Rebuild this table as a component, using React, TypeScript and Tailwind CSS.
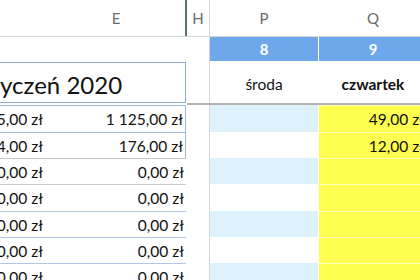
const rows = [
  { d: "5,00 zł", e: "1 125,00 zł", q: "49,00 zł", h: "h-[27px]", line: "border-[#9db8e0]" },
  { d: "4,00 zł", e: "176,00 zł", q: "12,00 zł", h: "h-[26px]", line: "border-[#9db8e0]" },
  { d: "0,00 zł", e: "0,00 zł", q: "", h: "h-[26px]", line: "border-[#c9c9c9]" },
  { d: "0,00 zł", e: "0,00 zł", q: "", h: "h-[27px]", line: "border-[#c9c9c9]" },
  { d: "0,00 zł", e: "0,00 zł", q: "", h: "h-[26px]", line: "border-[#b3c6e4]" },
  { d: "0,00 zł", e: "0,00 zł", q: "", h: "h-[26px]", line: "border-[#b3c6e4]" },
  { d: "0,00 zł", e: "0,00 zł", q: "", h: "h-[26px]", line: "border-[#b3c6e4]" },
];

export default function App() {
  return (
    <div
      className="w-[420px] h-[280px] overflow-hidden bg-white text-[#111] leading-none"
      style={{ fontFamily: "Lato, 'Noto Sans', sans-serif" }}
    >
      <div className="w-[430px] flex flex-col">
        {/* column letters */}
        <div className="flex h-[37px] border-b border-[#d6d6d6] text-[15px] text-[#6b6b6b]">
          <div className="w-[47px]" />
          <div className="w-[138px] flex items-center justify-center">E</div>
          <div className="w-[2px] bg-[#55775d]" />
          <div className="w-[22px] flex items-center justify-center">H</div>
          <div className="w-px bg-[#d6d6d6]" />
          <div className="w-[108px] flex items-center justify-center">P</div>
          <div className="w-px" />
          <div className="w-[108px] flex items-center justify-center">Q</div>
        </div>

        {/* day numbers */}
        <div className="flex h-[24px] text-[15px] font-bold text-white">
          <div className="w-[209px]" />
          <div className="w-px bg-[#d6d6d6]" />
          <div className="w-[108px] bg-[#6fa8ea] flex items-center justify-center">8</div>
          <div className="w-px" />
          <div className="w-[108px] bg-[#6fa8ea] flex items-center justify-center">9</div>
        </div>

        {/* title + day names */}
        <div className="flex h-[42px]">
          <div className="w-[186px] mt-px border-t border-r border-b border-[#8eaad6] overflow-hidden flex items-center">
            <span className="-ml-[21px] text-[24px] whitespace-nowrap pt-[5px]">Styczeń 2020</span>
          </div>
          <div className="w-[23px]" />
          <div className="w-px bg-[#d6d6d6]" />
          <div className="w-[108px] flex items-center justify-center text-[15.5px] pt-[6px]">środa</div>
          <div className="w-px" />
          <div className="w-[108px] flex items-center justify-center text-[15.5px] font-bold pt-[6px]">
            czwartek
          </div>
        </div>

        <div className="flex h-[2px]">
          <div className="w-[187px] bg-white" />
          <div className="flex-1 bg-[#b3b3b3]" />
        </div>

        {/* data rows */}
        {rows.map((r, i) => (
          <div key={i} className={`flex ${r.h} text-[15.5px]`}>
            <div className={`w-[186px] flex border-t ${r.line} ${i < 2 ? "border-r" : ""}`}>
              <div className="w-[47px] flex items-center justify-end pr-[4px] pt-[2px] whitespace-nowrap">
                {r.d}
              </div>
              <div className="flex-1 flex items-center justify-end pr-[2px] pt-[2px] whitespace-nowrap">
                {r.e}
              </div>
            </div>
            <div className="w-[23px]" />
            <div className="w-px bg-[#d6d6d6]" />
            <div className={`w-[108px] ${i % 2 === 0 ? "bg-[#ddf2fc]" : "bg-white"}`} />
            <div className="w-px" />
            <div className="w-[108px] bg-[#ffff4f] border-t border-[#ffffb8] flex items-center justify-end pr-[3px] pt-[2px] whitespace-nowrap">
              {r.q}
            </div>
          </div>
        ))}
      </div>
    </div>
  );
}
